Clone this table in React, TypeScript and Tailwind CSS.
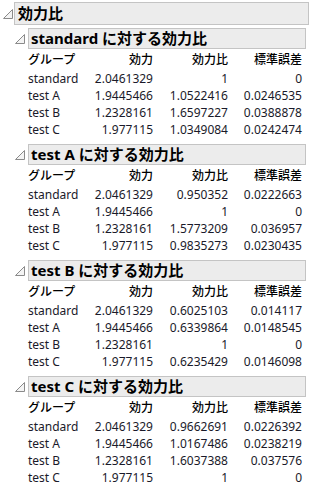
const rows = [
  {
    ref: "standard",
    data: [
      ["standard", "2.0461329", "1", "0"],
      ["test A", "1.9445466", "1.0522416", "0.0246535"],
      ["test B", "1.2328161", "1.6597227", "0.0388878"],
      ["test C", "1.977115", "1.0349084", "0.0242474"],
    ],
  },
  {
    ref: "test A",
    data: [
      ["standard", "2.0461329", "0.950352", "0.0222663"],
      ["test A", "1.9445466", "1", "0"],
      ["test B", "1.2328161", "1.5773209", "0.036957"],
      ["test C", "1.977115", "0.9835273", "0.0230435"],
    ],
  },
  {
    ref: "test B",
    data: [
      ["standard", "2.0461329", "0.6025103", "0.014117"],
      ["test A", "1.9445466", "0.6339864", "0.0148545"],
      ["test B", "1.2328161", "1", "0"],
      ["test C", "1.977115", "0.6235429", "0.0146098"],
    ],
  },
  {
    ref: "test C",
    data: [
      ["standard", "2.0461329", "0.9662691", "0.0226392"],
      ["test A", "1.9445466", "1.0167486", "0.0238219"],
      ["test B", "1.2328161", "1.6037388", "0.037576"],
      ["test C", "1.977115", "1", "0"],
    ],
  },
];

function Disclosure() {
  return (
    <svg width="10" height="10" viewBox="0 0 10 10" className="shrink-0">
      <polygon points="9.5,0.5 9.5,9.5 0.5,9.5" fill="#f4f4f4" stroke="#8a8a8a" strokeWidth="1" />
    </svg>
  );
}

function Row({ cells, head }: { cells: string[]; head?: boolean }) {
  return (
    <div className={`flex items-center ${head ? "h-[20px] text-black font-medium" : "h-[17px] text-[#1a1a2a]"}`}>
      <div className="w-[90px]">{cells[0]}</div>
      <div className="w-[35px] text-right whitespace-nowrap flex justify-end">{cells[1]}</div>
      <div className="w-[75px] text-right">{cells[2]}</div>
      <div className="w-[74px] text-right">{cells[3]}</div>
    </div>
  );
}

export default function App() {
  return (
    <div
      className="w-[310px] h-[489px] bg-white overflow-hidden pt-[2px]"
      style={{ fontFamily: '"Noto Sans", "Noto Sans CJK JP", sans-serif' }}
    >
      <div className="flex items-center">
        <div className="w-[14px] flex justify-center pl-[2px]">
          <Disclosure />
        </div>
        <div className="flex-1 h-[23px] mr-[1px] bg-[#ececec] border border-[#c4c4c4] flex items-center px-[3px] text-[15px] font-bold text-black leading-none">
          効力比
        </div>
      </div>
      <div className="flex flex-col gap-[6px] mt-[3px]">
        {rows.map((s) => (
          <div key={s.ref}>
            <div className="flex items-center">
              <div className="w-[28px] flex justify-end pr-[3px]">
                <Disclosure />
              </div>
              <div className="w-[278px] h-[21px] bg-[#ececec] border border-[#c4c4c4] flex items-center px-[2px] text-[15px] font-bold text-black leading-none whitespace-nowrap">
                {s.ref} に対する効力比
              </div>
            </div>
            <div className="pl-[28px] pt-[1px] text-[12px] leading-none">
              <Row head cells={["グループ", "効力", "効力比", "標準誤差"]} />
              {s.data.map((r) => (
                <Row key={r[0]} cells={r} />
              ))}
            </div>
          </div>
        ))}
      </div>
    </div>
  );
}
